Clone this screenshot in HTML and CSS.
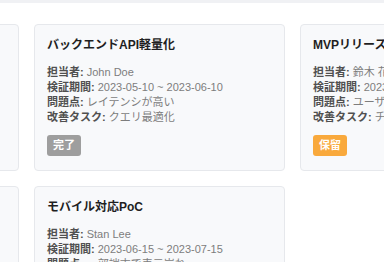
FILE: index.html
```html
<!DOCTYPE html>
<html lang="ja">
<head>
    <meta charset="UTF-8">
    <meta name="viewport" content="width=device-width, initial-scale=1.0">
    <title>PoC一覧</title>
    <link rel="stylesheet" href="styles.css">
</head>
<body>
    <div class="top-bar"></div>

    <div class="board">
        <div class="poc-grid">
            <div class="poc-card">
                <h3>検索機能リニューアル</h3>
                <p><b>担当者:</b> Jane Smith</p>
                <p><b>検証期間:</b> 2023-04-01 ~ 2023-04-30</p>
                <p><b>問題点:</b> 検索精度が低い</p>
                <p><b>改善タスク:</b> インデックス再設計</p>
                <span class="badge badge-active">進行中</span>
            </div>

            <div class="poc-card">
                <h3>バックエンドAPI軽量化</h3>
                <p><b>担当者:</b> John Doe</p>
                <p><b>検証期間:</b> 2023-05-10 ~ 2023-06-10</p>
                <p><b>問題点:</b> レイテンシが高い</p>
                <p><b>改善タスク:</b> クエリ最適化</p>
                <span class="badge badge-done">完了</span>
            </div>

            <div class="poc-card">
                <h3>MVPリリース準備</h3>
                <p><b>担当者:</b> 鈴木 花子</p>
                <p><b>検証期間:</b> 2023-06-01 ~ 2023-06-30</p>
                <p><b>問題点:</b> ユーザー数が少ない</p>
                <p><b>改善タスク:</b> チュートリアル追加</p>
                <span class="badge badge-hold">保留</span>
            </div>

            <div class="poc-card">
                <h3>チャットボット導入</h3>
                <p><b>担当者:</b> 山田 太郎</p>
                <p><b>検証期間:</b> 2023-06-01 ~ 2023-07-01</p>
                <p><b>問題点:</b> 回答精度が低い</p>
                <p><b>改善タスク:</b> 学習データ追加</p>
                <span class="badge badge-active">進行中</span>
            </div>

            <div class="poc-card">
                <h3>モバイル対応PoC</h3>
                <p><b>担当者:</b> Stan Lee</p>
                <p><b>検証期間:</b> 2023-06-15 ~ 2023-07-15</p>
                <p><b>問題点:</b> 一部端末で表示崩れ</p>
                <p><b>改善タスク:</b> CSS修正</p>
                <span class="badge badge-active">進行中</span>
            </div>
        </div>
    </div>
</body>
</html>
```

FILE: styles.css
```css
body {
    font-family: "Liberation Sans", Arial, "Noto Sans CJK JP", sans-serif;
    background-color: #fff;
    margin: 0;
    overflow: hidden;
}
.top-bar {
    height: 3px;
    background: #f0f1f4;
}
.board {
    padding: 21px 0 20px 0;
}
.poc-grid {
    display: grid;
    grid-template-columns: repeat(3, 251px);
    column-gap: 15px;
    row-gap: 15px;
    margin-left: -232px;
}
.poc-card {
    background: #f8f9fb;
    border: 1px solid #e6e8ec;
    border-radius: 4px;
    padding: 12px 12px 14px 12px;
}
.poc-card h3 {
    font-size: 12px;
    line-height: 16px;
    color: #1f1f1f;
    margin: 0 0 12px 0;
}
.poc-card p {
    font-size: 11px;
    line-height: 15px;
    color: #7d7d7d;
    margin: 0;
}
.poc-card p b {
    color: #505050;
}
.badge {
    display: inline-block;
    margin-top: 10px;
    padding: 0 6px;
    height: 21px;
    line-height: 21px;
    font-size: 11px;
    font-weight: bold;
    color: #fff;
    border-radius: 3px;
}
.badge-done {
    background: #9e9e9e;
}
.badge-hold {
    background: #f9a93c;
}
.badge-active {
    background: #4a90d9;
}
```
